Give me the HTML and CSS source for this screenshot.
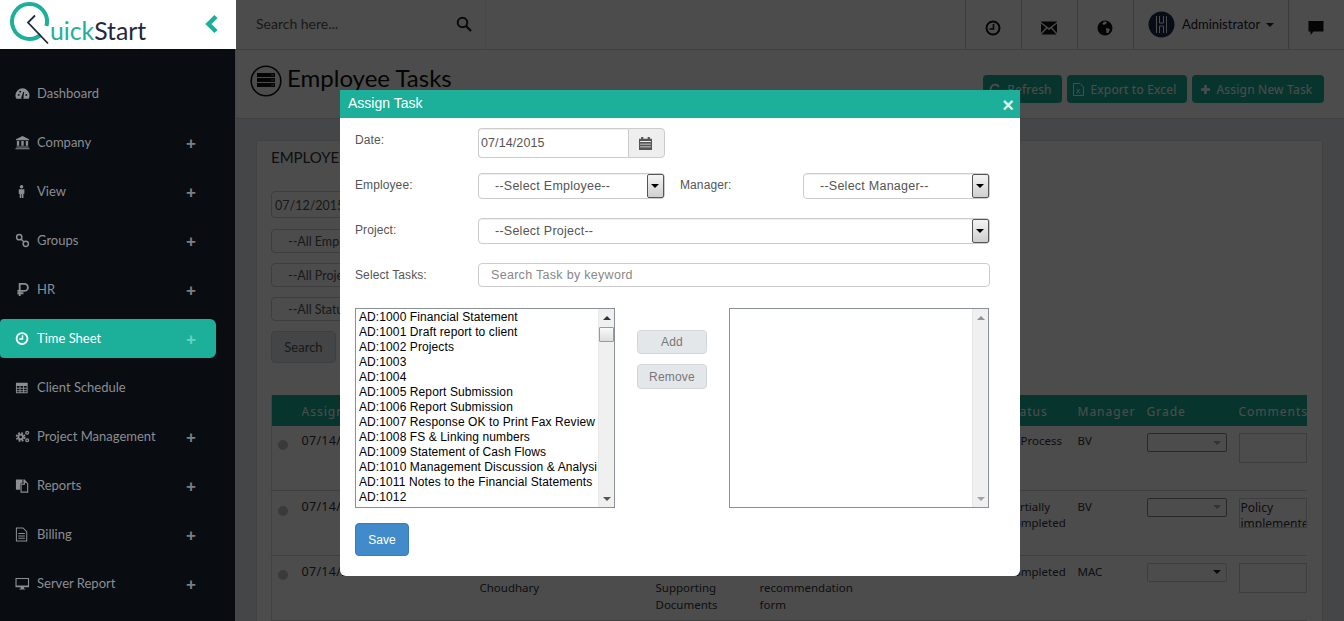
FILE: index.html
```html
<!DOCTYPE html>
<html lang="en">
<head>
<meta charset="utf-8">
<title>Employee Tasks</title>
<link rel="stylesheet" href="styles.css">
</head>
<body>
<div class="app">
  <aside class="side">
    <div class="logo">
      <svg class="logo-mark" width="50" height="46" viewBox="0 0 50 46">
        <path d="M46.400 26A17.500 17.500 0 1 0 40.700 34.900" fill="none" stroke="#1cb09a" stroke-width="4"/>
        <path d="M35 15.500L28 22.500L48 43.500" fill="none" stroke="#23293b" stroke-width="1.800"/>
      </svg>
      <span class="logo-text"><span class="logo-a">uick</span>Start</span>
      <svg class="logo-back" width="14" height="20" viewBox="0 0 14 20"><path d="M11 2.500L3.500 10L11 17.500" fill="none" stroke="#1cb09a" stroke-width="4.500"/></svg>
    </div>
    <nav class="nav">
      <a class="item"><svg class="ic" viewBox="0 0 16 16"><path fill-rule="evenodd" d="M8 2.500a7.500 7.500 0 0 1 7.500 7.500c0 1.500-.4 2.700-1 3.500h-13c-.6-.8-1-2-1-3.500A7.500 7.500 0 0 1 8 2.500zM7 11.500a1.300 1.300 0 1 0 2 0l.8-5-1 0z"/><circle cx="4" cy="9.500" r="1" fill="#090c11"/><circle cx="12" cy="9.500" r="1" fill="#090c11"/><circle cx="5.500" cy="6" r="1" fill="#090c11"/></svg><span class="lbl">Dashboard</span></a>
      <a class="item"><svg class="ic" viewBox="0 0 16 16"><path d="M8 1L15 4.500V5.500H1V4.500zM2 6.500H4.500V11.500H2zM6.700 6.500H9.300V11.500H6.700zM11.500 6.500H14V11.500H11.500zM1.500 12.300H14.500V13.300H1.500zM.5 14H15.500V15.200H.5z"/></svg><span class="lbl">Company</span><span class="plus">+</span></a>
      <a class="item"><svg class="ic" viewBox="0 0 16 16"><circle cx="7" cy="3" r="1.900"/><path d="M4 5.500H10V10.500H9V15H7.300V11H6.700V15H5V10.500H4z"/></svg><span class="lbl">View</span><span class="plus">+</span></a>
      <a class="item"><svg class="ic" viewBox="0 0 16 16"><g fill="none" stroke="currentColor" stroke-width="1.600"><circle cx="4.500" cy="4.500" r="2.800"/><circle cx="11.500" cy="11.500" r="2.800"/><path d="M6.500 6.500L9.500 9.500"/></g></svg><span class="lbl">Groups</span><span class="plus">+</span></a>
      <a class="item"><svg class="ic" viewBox="0 0 16 16"><path d="M5 15V2H10a3.500 3.500 0 0 1 0 7.500H2.500M2.500 12H9" fill="none" stroke="currentColor" stroke-width="2"/></svg><span class="lbl">HR</span><span class="plus">+</span></a>
      <a class="item active"><svg class="ic" viewBox="0 0 16 16"><g fill="none" stroke="currentColor"><circle cx="7.500" cy="8" r="5.800" stroke-width="2"/><path d="M8 4.500V8.500H4.500" stroke-width="1.600"/></g></svg><span class="lbl">Time Sheet</span><span class="plus">+</span></a>
      <a class="item"><svg class="ic" viewBox="0 0 16 16"><path fill-rule="evenodd" d="M1 3H13.500V14H1zM2 6.500V8.300H4.800V6.500zM5.800 6.500V8.300H8.700V6.500zM9.700 6.500V8.300H12.500V6.500zM2 9.300V11H4.800V9.300zM5.800 9.300V11H8.700V9.300zM9.700 9.300V11H12.500V9.300zM2 12V13H4.800V12zM5.800 12V13H8.700V12zM9.700 12V13H12.500V12z"/></svg><span class="lbl">Client Schedule</span></a>
      <a class="item"><svg class="ic" viewBox="0 0 16 16"><g fill="none" stroke="currentColor"><circle cx="6" cy="8.500" r="2.500" stroke-width="2"/><circle cx="6" cy="8.500" r="4.300" stroke-width="1.800" stroke-dasharray="2 1.400"/><circle cx="13" cy="4" r="1.500" stroke-width="1.400"/><circle cx="13" cy="12" r="1.500" stroke-width="1.400"/></g></svg><span class="lbl">Project Management</span><span class="plus">+</span></a>
      <a class="item"><svg class="ic" viewBox="0 0 16 16"><path d="M1 1.500H8V4.500L5.500 6.500V12.500H1z"/><path d="M6.500 6.500H10V2.500L13.500 6V15H6.500z" fill="none" stroke="currentColor" stroke-width="1.200"/><path d="M9 1.500L10 1.500L13 5L9 5z"/></svg><span class="lbl">Reports</span><span class="plus">+</span></a>
      <a class="item"><svg class="ic" viewBox="0 0 16 16"><path d="M1.500 1H8.500L12.500 5V15H1.500zM3.500 7H10.500M3.500 9.500H10.500M3.500 12H10.500" fill="none" stroke="currentColor" stroke-width="1.100"/></svg><span class="lbl">Billing</span><span class="plus">+</span></a>
      <a class="item"><svg class="ic" viewBox="0 0 16 16"><path fill-rule="evenodd" d="M.5 2H15V12H9.500V13.500H11V14.500H4.500V13.500H6V12H.5zM1.700 3.200V10H13.800V3.200z"/></svg><span class="lbl">Server Report</span><span class="plus">+</span></a>
    </nav>
  </aside>

  <main class="main">
    <header class="top">
      <div class="search">
        <span class="search-ph">Search here...</span>
        <svg class="search-ic" width="16" height="16" viewBox="0 0 16 16"><circle cx="6.500" cy="6.500" r="4.800" fill="none" stroke="#222" stroke-width="2"/><path d="M10 10L15 15" stroke="#222" stroke-width="2.400"/></svg>
      </div>
      <div class="cell"><svg width="16" height="16" viewBox="0 0 16 16"><g fill="none" stroke="#111"><circle cx="8" cy="8" r="6.500" stroke-width="2"/><path d="M8.500 4V9H4.500" stroke-width="1.600"/></g></svg></div>
      <div class="cell"><svg width="16" height="14" viewBox="0 0 16 14"><path fill="#111" d="M0 1L8 7L16 1V.5H0zM0 2.500V12L5 6.500zM16 2.500V12L11 6.500zM6 7.500L.5 13.500H15.500L10 7.500L8 9z"/></svg></div>
      <div class="cell"><svg width="16" height="16" viewBox="0 0 16 16"><circle cx="8" cy="8" r="7.500" fill="#111"/><path fill="#fff" d="M7 1.500L10 2L9 4L6.500 5L5.500 3.500zM9 8L13 9L11.500 13L9.500 13z"/></svg></div>
      <div class="user">
        <svg class="avatar" width="27" height="27" viewBox="0 0 27 27"><circle cx="13.500" cy="13.500" r="13" fill="#1a2a4a"/><path d="M8.500 5V22M11.500 5V12M11.500 15V22M15.500 5V12M15.500 15V22M18.500 5V22M11.500 12H15.500M11.500 15H15.500" fill="none" stroke="#fff" stroke-width="1"/></svg>
        <span class="user-name">Administrator</span><span class="caret"></span>
      </div>
      <div class="cell cell-last"><svg width="16" height="14" viewBox="0 0 16 14"><path fill="#111" d="M.5 0H15.500V10.500H5.500L2.500 14V10.500H.5z"/></svg></div>
    </header>

    <section class="head">
      <div class="title">
        <svg width="32" height="32" viewBox="0 0 32 32"><circle cx="16" cy="16" r="14.800" fill="none" stroke="#111" stroke-width="1.600"/><path fill="#111" d="M7 8H25V12H7zM7 13H25V17H7zM7 18H25V22H7z"/><path stroke="#999" d="M21 10H24M21 15H24M21 20H24"/></svg>
        <h1>Employee Tasks</h1>
      </div>
      <div class="actions">
        <button class="act act-r"><svg width="12" height="12" viewBox="0 0 12 12"><path d="M10 4A4.500 4.500 0 1 0 10.500 7" fill="none" stroke="#fff" stroke-width="1.800"/></svg>Refresh</button>
        <button class="act act-e"><svg width="11" height="13" viewBox="0 0 11 13"><path d="M.5.5H7L10.500 4V12.500H.5zM3.500 6L7 10.500M7 6L3.500 10.500" fill="none" stroke="#fff"/></svg>Export to Excel</button>
        <button class="act act-a"><svg width="11" height="11" viewBox="0 0 11 11"><path d="M5.500 1V10M1 5.500H10" stroke="#fff" stroke-width="2.600"/></svg>Assign New Task</button>
      </div>
    </section>

    <section class="content">
      <div class="card">
        <div class="card-title">EMPLOYEE TASKS</div>
        <div class="filters">
          <div class="f f-date">07/12/2015</div>
          <div class="f f-sel">--All Employee--</div>
          <div class="f f-sel">--All Project--</div>
          <div class="f f-sel">--All Status--</div>
          <button class="f-btn">Search</button>
        </div>
        <table class="tbl">
          <colgroup><col class="c0"><col class="c1"><col class="c2"><col class="c3"><col class="c4"><col class="c5"><col class="c6"><col class="c7"><col class="c8"></colgroup>
          <thead><tr><th></th><th>Assign Date</th><th>Employee</th><th>Task</th><th>Description</th><th>Status</th><th>Manager</th><th>Grade</th><th>Comments</th></tr></thead>
          <tbody>
            <tr class="r1">
              <td><span class="dot"></span></td><td class="d">07/14/2015</td><td></td><td></td><td></td><td>In Process</td><td>BV</td>
              <td><div class="g g-off"><span class="g-arrow"></span></div></td><td><div class="cmt"></div></td>
            </tr>
            <tr class="r2">
              <td><span class="dot"></span></td><td class="d">07/14/2015</td><td></td><td></td><td></td><td>Partially<br>Completed</td><td>BV</td>
              <td><div class="g g-off"><span class="g-arrow"></span></div></td><td><div class="cmt">Policy implemented</div></td>
            </tr>
            <tr class="r3">
              <td><span class="dot"></span></td><td class="d">07/14/2015</td><td>&nbsp;<br>Choudhary</td><td>&nbsp;<br>Supporting<br>Documents</td><td>&nbsp;<br>recommendation<br>form</td><td>Completed</td><td>MAC</td>
              <td><div class="g"><span class="g-arrow"></span></div></td><td><div class="cmt"></div></td>
            </tr>
          </tbody>
        </table>
      </div>
    </section>
    <div class="backdrop"></div>
  </main>
</div>

<div class="modal">
  <div class="m-head"><span>Assign Task</span><span class="m-x">×</span></div>
  <form class="m-body">
    <div class="row row-date">
      <label class="lab">Date:</label>
      <div class="dategroup">
        <input class="dateinput" value="07/14/2015">
        <span class="addon"><svg width="13" height="13" viewBox="0 0 12 12"><path fill="#555" fill-rule="evenodd" d="M2 0H4V1.500H8V0H10V1.500H12V12H0V1.500H2zM1 3.800V4.500H11V3.800zM1 6.300V7H11V6.300zM1 8.800V9.500H11V8.800z"/></svg></span>
      </div>
    </div>
    <div class="row row-emp">
      <label class="lab">Employee:</label>
      <div class="sel sel-short">--Select Employee--<span class="sel-btn"></span></div>
      <label class="lab lab-mgr">Manager:</label>
      <div class="sel sel-short">--Select Manager--<span class="sel-btn"></span></div>
    </div>
    <div class="row row-prj">
      <label class="lab">Project:</label>
      <div class="sel sel-long">--Select Project--<span class="sel-btn"></span></div>
    </div>
    <div class="row row-tasks">
      <label class="lab">Select Tasks:</label>
      <input class="taskinput" placeholder="Search Task by keyword">
    </div>
    <div class="lists">
      <div class="listbox">
        <ul class="opts">
          <li>AD:1000 Financial Statement</li>
          <li>AD:1001 Draft report to client</li>
          <li>AD:1002 Projects</li>
          <li>AD:1003</li>
          <li>AD:1004</li>
          <li>AD:1005 Report Submission</li>
          <li>AD:1006 Report Submission</li>
          <li>AD:1007 Response OK to Print Fax Review of</li>
          <li>AD:1008 FS &amp; Linking numbers</li>
          <li>AD:1009 Statement of Cash Flows</li>
          <li>AD:1010 Management Discussion &amp; Analysis</li>
          <li>AD:1011 Notes to the Financial Statements</li>
          <li>AD:1012</li>
        </ul>
        <div class="sb"><span class="up"></span><span class="thumb"></span><span class="grow"></span><span class="down"></span></div>
      </div>
      <div class="mid">
        <button type="button" class="mv mv-add">Add</button>
        <button type="button" class="mv mv-rem">Remove</button>
      </div>
      <div class="listbox">
        <ul class="opts"></ul>
        <div class="sb sb-off"><span class="up"></span><span class="grow"></span><span class="down"></span></div>
      </div>
    </div>
    <button type="button" class="save">Save</button>
  </form>
</div>
</body>
</html>
```

FILE: styles.css
```css
* { box-sizing: border-box; }
html, body { margin: 0; height: 621px; overflow: hidden; }
body { font-family: "Liberation Sans", Arial, sans-serif; background: #e6ecf0; }
button, input { font-family: inherit; }
.app { display: flex; height: 621px; position: relative; overflow: hidden; }

/* sidebar */
.side { width: 236px; flex: none; display: flex; flex-direction: column; position: relative; z-index: 3; background: #45474a; }
.logo { height: 49px; background: #fff; display: flex; align-items: flex-start; position: relative; }
.logo-mark { flex: none; }
.logo-text { font-family: Lato, sans-serif; font-size: 24.800px; line-height: 26px; color: #23293b; margin: 18px 0 0 0; }
.logo-a { color: #1cb09a; }
.logo-back { margin: 14px 17px 0 auto; flex: none; }
.nav { flex: 1; width: 235px; background: #090c11; padding-top: 25px; display: flex; flex-direction: column; gap: 10px; }
.item { height: 39px; width: 216px; display: flex; align-items: center; padding-left: 15px; color: #8b8e93; font: 13px/1 Lato, sans-serif; border-radius: 0 6px 6px 0; }
.item.active { background: #1cb09a; color: #fff; font-weight: 400; border-radius: 4px 6px 6px 4px; }
.ic { width: 15px; height: 15px; fill: currentColor; flex: none; margin-right: 7px; }
.lbl { flex: 1; }
.plus { width: 12px; margin-right: 19px; text-align: center; font: 700 17px/1 "Liberation Sans", sans-serif; color: #7b7e83; padding-top: 1px; }
.active .plus { color: #6fd0c2; }

/* main */
.main { flex: 1; min-width: 0; position: relative; display: flex; flex-direction: column; background: #e6ecf0; color: #333; }
.backdrop { position: absolute; inset: 0; background: rgba(0, 0, 0, .7); z-index: 2; }
.top { height: 50px; background: #fff; border-bottom: 1px solid #d8d8d8; display: flex; align-items: stretch; flex: none; }
.search { width: 250px; border-right: 1px solid #ececec; padding-left: 20px; padding-right: 13px; display: flex; align-items: center; justify-content: space-between; font: 14px Lato, sans-serif; color: #555; margin-right: 479px; }
.search-ph { margin-top: -2px; }
.search-ic { margin-top: -1px; }
.cell { width: 56px; border-left: 1px solid #c8c8c8; display: flex; align-items: center; justify-content: center; padding: 6px 1px 0 0; }
.cell-last { flex: 1; }
.user { width: 155px; border-left: 1px solid #c8c8c8; display: flex; align-items: center; padding-left: 14px; font: 13px Lato, sans-serif; color: #222; }
.avatar { flex: none; }
.user-name { margin-left: 7px; margin-top: -2px; }
.caret { width: 0; height: 0; border: 4px solid transparent; border-top-color: #222; border-bottom: 0; margin-left: 6px; }
.head { height: 69px; background: #fff; border-bottom: 1px solid #d8d8d8; display: flex; justify-content: space-between; flex: none; padding: 15px 20px 0 14px; }
.title { display: flex; align-items: flex-start; gap: 5px; }
.title h1 { margin: 0; font: 400 24px/26px Lato, sans-serif; color: #111; }
.actions { display: flex; gap: 5px; padding-top: 10px; }
.act { height: 28px; border: 0; border-radius: 4px; background: #1cb09a; color: #fff; font: 12px "Noto Sans", sans-serif; letter-spacing: .2px; display: flex; align-items: center; justify-content: center; gap: 6px; padding: 0 4px 0 0; }
.act-r { width: 79px; }
.act-e { width: 120px; }
.act-a { width: 132px; }
.content { flex: 1; padding: 21px 21px 0 20px; }
.card { height: 500px; background: #fff; border: 1px solid #ddd; border-radius: 3px; padding: 6px 15px 0 14px; }
.card-title { font: 15px/20px Lato, sans-serif; color: #333; }
.filters { display: flex; flex-direction: column; align-items: flex-start; margin: 24px 0 0 0; }
.f { width: 200px; border: 1px solid #ccc; border-radius: 4px; color: #555; font: 12.500px Lato, sans-serif; display: flex; align-items: center; }
.f-date { height: 27px; padding: 2px 0 0 3px; margin-bottom: 11px; }
.f-sel { height: 24px; padding-left: 16px; margin-bottom: 10px; }
.f-btn { width: 65px; height: 32px; background: #e4e7ea; border: 1px solid #d0d3d6; border-radius: 4px; font: 13px Lato, sans-serif; color: #555; }
.tbl { margin-top: 32px; width: 1035px; border-collapse: collapse; table-layout: fixed; font: 11.500px/16.500px "Noto Sans", sans-serif; color: #333; border-left: 1px solid #ddd; }
.c0 { width: 30px; } .c1 { width: 178px; } .c2 { width: 176px; } .c3 { width: 104px; } .c4 { width: 247px; } .c5 { width: 71px; } .c6 { width: 69px; } .c7 { width: 92px; } .c8 { width: 68px; }
.tbl th { background: #1cb09a; color: #fff; height: 31px; text-align: left; font-size: 12px; font-weight: 400; letter-spacing: 1px; padding: 3px 0 0; white-space: nowrap; overflow: hidden; }
.tbl td { vertical-align: top; padding: 7px 0 0; border-bottom: 1px solid #d4d4d4; }
.tbl td.d { font-size: 12.500px; letter-spacing: .3px; }
.r1 td, .r1 { height: 64px; }
.r2 td, .r2 { height: 65px; }
.r3 td, .r3 { height: 65px; }
.tbl .r2 td, .tbl .r3 td { padding-top: 8px; }
.r2 .g, .r3 .g, .r2 .cmt, .r3 .cmt { margin-top: -1px; }
.dot { display: block; width: 10px; height: 10px; margin: 7px 0 0 6px; border-radius: 50%; background: #c3c3c3; }
.r3 .dot { margin-top: 6px; }
.g { width: 80px; height: 19px; border: 1px solid #ccc; border-radius: 2px; display: flex; align-items: center; justify-content: flex-end; padding-right: 5px; }
.g-off { border-color: #888; }
.g-arrow { width: 0; height: 0; border: 4px solid transparent; border-top-color: #222; border-bottom: 0; }
.g-off .g-arrow { border-top-color: #aaa; }
.cmt { width: 68px; height: 30px; border: 1px solid #ccc; padding: 1px 1px 0; font-size: 12px; overflow: hidden; }

/* modal */
.modal { position: absolute; left: 340px; top: 90px; width: 680px; height: 486px; background: #fff; border-radius: 0 0 6px 6px; z-index: 4; }
.m-head { height: 28px; background: #1cb09a; color: #fff; font-size: 14px; display: flex; align-items: center; justify-content: space-between; padding: 0 6px 2px 8px; }
.m-x { font: 700 20px/1 "Liberation Sans", sans-serif; color: #d8f2ed; margin-top: 3px; }
.m-body { display: block; padding: 10px 30px 0 15px; }
.row { display: flex; align-items: flex-start; }
.lab { width: 123px; flex: none; font-size: 12px; color: #555; letter-spacing: .1px; }
.row-date { height: 30px; margin-bottom: 15px; }
.row-date .lab { padding-top: 5px; }
.row-emp { height: 26px; margin-bottom: 19px; }
.row-emp .lab { padding-top: 5px; }
.lab-mgr { margin-left: 15px; }
.row-prj { height: 26px; margin-bottom: 19px; }
.row-prj .lab { padding-top: 5px; }
.row-tasks { height: 24px; margin-bottom: 21px; }
.row-tasks .lab { padding-top: 5px; }
.dategroup { display: flex; width: 187px; height: 30px; }
.dateinput { width: 150px; height: 30px; border: 1px solid #ccc; border-right: 0; border-radius: 4px 0 0 4px; padding: 0 2px; font-size: 12.500px; color: #555; box-shadow: inset 0 1px 1px rgba(0, 0, 0, .07); letter-spacing: .1px; outline: 0; }
.addon { flex: 1; background: #eee; border: 1px solid #ccc; border-radius: 0 4px 4px 0; display: flex; align-items: center; justify-content: center; padding-right: 2px; }
.sel { position: relative; height: 26px; border: 1px solid #ccc; border-radius: 4px; padding: 0 0 0 16px; font-size: 12.500px; line-height: 24px; color: #555; box-shadow: inset 0 1px 1px rgba(0, 0, 0, .07); letter-spacing: .25px; }
.sel-short { width: 187px; }
.sel-long { width: 512px; }
.sel-btn { position: absolute; right: 0; top: 0; width: 17px; height: 24px; background: linear-gradient(#f4f4f4, #cfcfcf); border: 1px solid #555; border-radius: 2px; }
.sel-btn::after { content: ""; position: absolute; left: 3px; top: 9px; border: 4px solid transparent; border-top-color: #000; border-bottom: 0; }
.taskinput { width: 512px; height: 24px; border: 1px solid #ccc; border-radius: 4px; padding: 0 12px; font-size: 12.500px; color: #555; letter-spacing: .3px; outline: 0; }
.taskinput::placeholder { color: #888; opacity: 1; }
.lists { display: flex; height: 200px; }
.listbox { width: 260px; height: 200px; border: 1px solid #8a8f98; display: flex; overflow: hidden; }
.opts { list-style: none; margin: 0; padding: 1px 1px 0 3px; flex: 1; min-width: 0; font-size: 12px; line-height: 15px; color: #000; letter-spacing: .1px; }
.opts li { white-space: nowrap; overflow: hidden; }
.sb { width: 16px; flex: none; background: #f0f0f0; border-left: 1px solid #e8e8e8; display: flex; flex-direction: column; align-items: center; padding: 7px 0 6px; }
.up { width: 0; height: 0; border: 4px solid transparent; border-top: 0; border-bottom-color: #333; }
.down { width: 0; height: 0; border: 4px solid transparent; border-bottom: 0; border-top-color: #555; }
.thumb { width: 15px; height: 15px; margin-top: 7px; background: linear-gradient(#fafafa, #ddd); border: 1px solid #9a9a9a; border-radius: 1px; }
.grow { flex: 1; }
.sb-off .up, .sb-off .down { opacity: .5; }
.mid { width: 114px; flex: none; padding: 22px 0 0 22px; display: flex; flex-direction: column; align-items: flex-start; gap: 10px; }
.mv { width: 70px; background: #e4e7ea; border: 1px solid #d4d7da; border-radius: 4px; color: #777; font-size: 12px; padding: 0; letter-spacing: .2px; }
.mv-add { height: 24px; }
.mv-rem { height: 25px; }
.save { display: block; margin-top: 15px; width: 54px; height: 33px; background: #428bca; border: 1px solid #357ebd; border-radius: 4px; color: #fff; font-size: 12px; padding: 0; }
```
